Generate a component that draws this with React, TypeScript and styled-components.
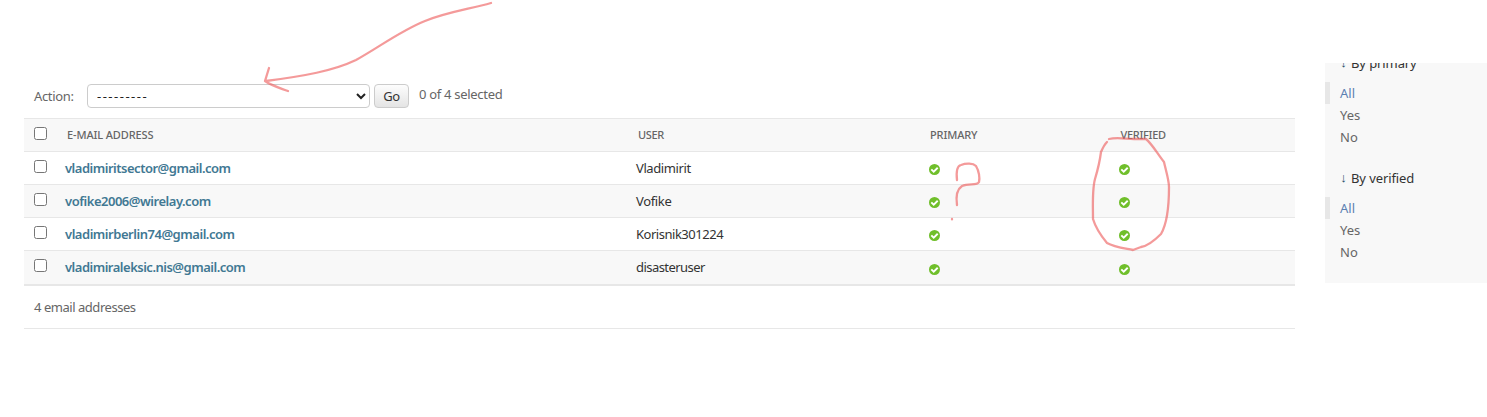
import React from 'react';
import styled, { createGlobalStyle } from 'styled-components';

const GlobalStyle = createGlobalStyle`
  *, *::before, *::after { box-sizing: border-box; }
  body {
    margin: 0;
    background: #fff;
    color: #333;
    font: 13px/20px "Segoe UI", "Noto Sans", "Open Sans", sans-serif;
    overflow: hidden;
  }
`;

const Page = styled.div`
  position: relative;
  display: flex;
  align-items: flex-start;
  gap: 30px;
  width: 1487px;
  height: 417px;
  padding: 63px 0 0 24px;
  overflow: hidden;
`;

const ChangeList = styled.main`
  width: 1271px;
  padding-top: 21px;
`;

const Text = styled.span<{ $spacing?: number }>`
  letter-spacing: ${(p) => p.$spacing ?? 0}px;
  white-space: nowrap;
`;

const Actions = styled.div`
  display: flex;
  align-items: center;
  height: 34px;
  padding: 0 0 10px 10px;
  color: #666;
`;

const ActionLabel = styled.label`
  width: 53px;
`;

const Select = styled.select`
  width: 283px;
  height: 24px;
  padding: 0 5px;
  border: 1px solid #ccc;
  border-radius: 4px;
  background: #fff;
  color: #222;
  font: inherit;
  letter-spacing: 1.5px;
`;

const GoButton = styled.button`
  width: 35px;
  height: 24px;
  margin: 0 10px 0 4px;
  padding: 0;
  border: 1px solid #ccc;
  border-radius: 4px;
  background: linear-gradient(#fdfdfd, #e4e4e4);
  color: #333;
  font: inherit;
  letter-spacing: -0.3px;
`;

const Counter = styled.div`
  padding-bottom: 4px;
`;

const Row = styled.div<{ $shaded?: boolean; $last?: boolean }>`
  display: grid;
  grid-template-columns: 41px 571px 293px 190px 1fr;
  grid-template-rows: 32px;
  align-items: center;
  height: ${(p) => (p.$last ? 35 : 33)}px;
  border-bottom: ${(p) => (p.$last ? 2 : 1)}px solid #e7e7e7;
  background: ${(p) => (p.$shaded ? '#f8f8f8' : '#fff')};
`;

const HeaderRow = styled(Row)`
  height: 34px;
  border-top: 1px solid #e7e7e7;
  color: #666;
  font-size: 11px;
  font-weight: 500;
`;

const HeaderCell = styled.div<{ $inset?: number }>`
  padding-left: ${(p) => p.$inset ?? 2}px;
`;

const Checkbox = styled.input.attrs({ type: 'checkbox' })`
  display: block;
  width: 13px;
  height: 13px;
  margin: 0 0 3px 10px;
`;

const EmailLink = styled.a`
  color: #417893;
  font-weight: 600;
  text-decoration: none;
`;

const StatusCell = styled.div<{ $last?: boolean }>`
  padding-top: ${(p) => (p.$last ? 5 : 3)}px;
  line-height: 0;
`;

const Paginator = styled.div`
  height: 43px;
  padding: 11px 10px;
  border-bottom: 1px solid #e7e7e7;
  color: #666;
`;

const Sidebar = styled.aside`
  width: 162px;
  height: 220px;
  background: #f8f8f8;
  overflow: hidden;
`;

const FilterGroup = styled.section`
  height: 115px;
  margin-top: 0;
  &:first-child { margin-top: -11px; }
`;

const FilterTitle = styled.h3`
  display: flex;
  gap: 4px;
  height: 22px;
  margin: 0 0 8px 15px;
  font-size: 13px;
  font-weight: 400;
  line-height: 22px;
`;

const TitleArrow = styled.span`
  display: flex;
  justify-content: center;
  width: 7px;
  color: #205067;
  font: 13px/22px "Liberation Sans", sans-serif;
`;

const FilterOption = styled.a<{ $selected?: boolean }>`
  display: block;
  height: 22px;
  padding-left: 10px;
  border-left: 5px solid ${(p) => (p.$selected ? '#e7e7e7' : 'transparent')};
  color: ${(p) => (p.$selected ? '#5b80b2' : '#666')};
  line-height: 22px;
`;

const Annotations = styled.svg`
  position: absolute;
  inset: 0;
  pointer-events: none;
`;

const YesIcon = () => (
  <svg width="11" height="11" viewBox="0 0 11 11" aria-label="True">
    <circle cx="5.5" cy="5.5" r="5.5" fill="#70bf2b" />
    <path d="M2.3 5.4 4.7 7.7 8.7 3.8" fill="none" stroke="#fff" strokeWidth="1.9" />
  </svg>
);

const accounts = [
  { email: 'vladimiritsector@gmail.com', user: 'Vladimirit', es: -0.49, us: -0.4 },
  { email: 'vofike2006@wirelay.com', user: 'Vofike', es: -0.48, us: -0.35 },
  { email: 'vladimirberlin74@gmail.com', user: 'Korisnik301224', es: -0.47, us: -0.48 },
  { email: 'vladimiraleksic.nis@gmail.com', user: 'disasteruser', es: -0.5, us: -0.55 },
];

const Filter = ({ title }: { title: string }) => (
  <FilterGroup>
    <FilterTitle>
      <TitleArrow>↓</TitleArrow>
      <Text $spacing={-0.1}>{title}</Text>
    </FilterTitle>
    <FilterOption $selected>All</FilterOption>
    <FilterOption>Yes</FilterOption>
    <FilterOption>No</FilterOption>
  </FilterGroup>
);

export default function App() {
  return (
    <Page>
      <GlobalStyle />
      <ChangeList>
        <Actions>
          <ActionLabel><Text $spacing={-0.35}>Action:</Text></ActionLabel>
          <Select><option>---------</option></Select>
          <GoButton>Go</GoButton>
          <Counter><Text $spacing={-0.3}>0 of 4 selected</Text></Counter>
        </Actions>
        <HeaderRow $shaded>
          <Checkbox />
          <HeaderCell><Text $spacing={-0.12}>E-MAIL ADDRESS</Text></HeaderCell>
          <HeaderCell><Text $spacing={-0.35}>USER</Text></HeaderCell>
          <HeaderCell $inset={1}><Text $spacing={-0.13}>PRIMARY</Text></HeaderCell>
          <HeaderCell $inset={1.5}><Text $spacing={-0.3}>VERIFIED</Text></HeaderCell>
        </HeaderRow>
        {accounts.map((a, i) => (
          <Row key={a.email} $shaded={i % 2 === 1} $last={i === 3}>
            <Checkbox />
            <EmailLink><Text $spacing={a.es}>{a.email}</Text></EmailLink>
            <Text $spacing={a.us}>{a.user}</Text>
            <StatusCell $last={i === 3}><YesIcon /></StatusCell>
            <StatusCell $last={i === 3}><YesIcon /></StatusCell>
          </Row>
        ))}
        <Paginator><Text $spacing={-0.46}>4 email addresses</Text></Paginator>
      </ChangeList>
      <Sidebar>
        <Filter title="By primary" />
        <Filter title="By verified" />
      </Sidebar>
      <Annotations width="1487" height="417" fill="none" stroke="#ed5c5c" strokeOpacity="0.62" strokeWidth="2.3" strokeLinecap="round" strokeLinejoin="round">
        <path d="M491 3C470 9 447 12 425 21C400 31 378 48 356 60C333 71 304 76 266 81M269 68L265 81C272 86 280 88 288 91" />
        <path d="M957 180C956 171 957 166 961 165C966 163 973 163 976 166C979 171 980 178 979 182C977 186 969 183 962 186C956 190 956 198 957 205M952 219v.4" />
        <path d="M1109 139C1117 137 1126 139 1134 139L1146 139C1152 144 1157 153 1164 162C1166 171 1169 180 1169 187C1169 204 1168 222 1161 234C1155 240 1148 246 1141 247L1133 250C1123 248 1114 247 1107 243C1102 237 1096 229 1093 219C1093 207 1092 190 1095 179C1098 169 1100 160 1101 152Q1104 145 1107 142" />
      </Annotations>
    </Page>
  );
}
